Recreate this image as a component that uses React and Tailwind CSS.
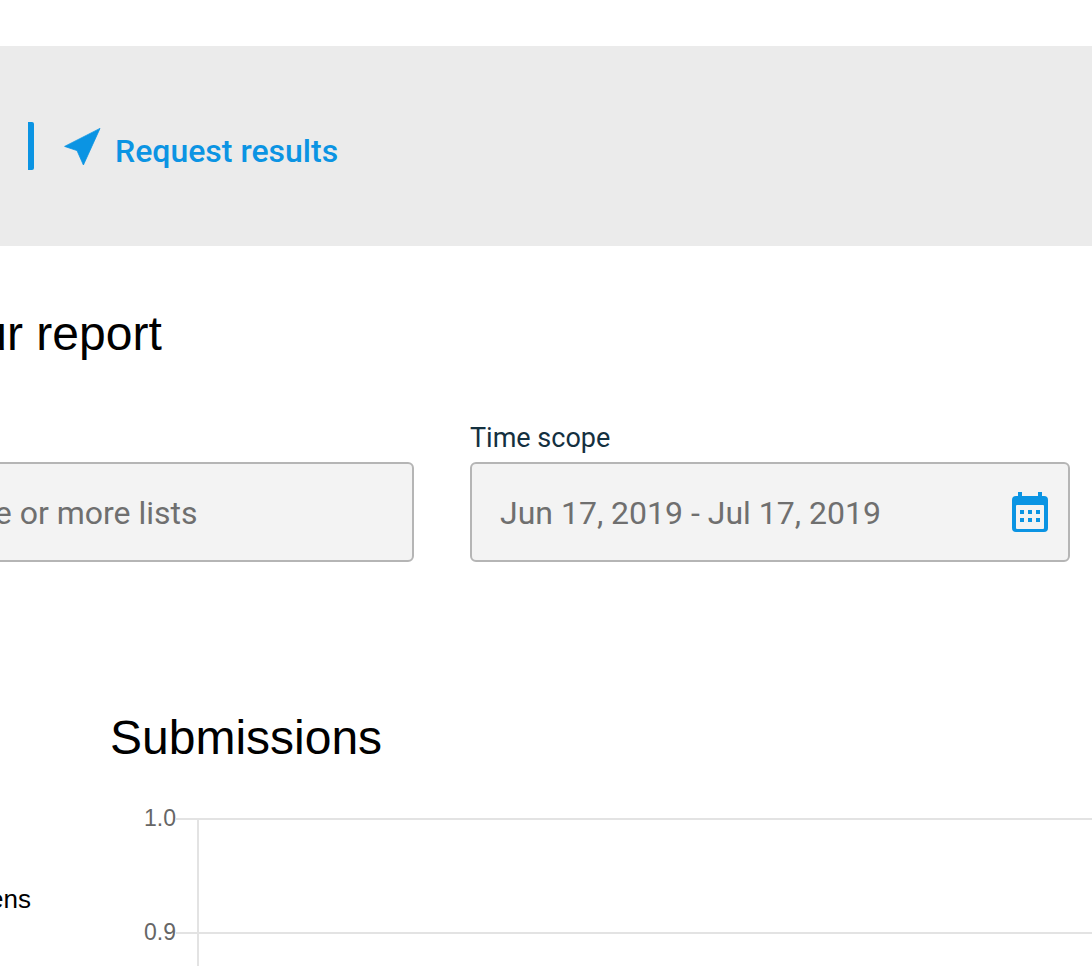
export default function App() {
  const roboto = "font-['Roboto',sans-serif]";
  const helv = "font-['Liberation_Sans',Arial,sans-serif]";
  const dots = [[8, 18], [16, 18], [24, 18], [8, 26], [16, 26], [24, 26]];
  return (
    <div className="w-[1092px] h-[966px] overflow-hidden bg-white">
      <div className="h-[200px] mt-[46px] bg-[#ebebeb] flex items-center pl-[28px]">
        <div className="w-[6px] h-[48px] rounded-r-[2px] bg-[#0b94e3]" />
        <svg width="37" height="38" viewBox="0 0 37 38" className="ml-[30px] mr-[14px] mt-[2px]">
          <path d="M0.6 18.4 L36 0.4 L19.4 37 L13 22.6 Z" fill="#0b94e3" stroke="#0b94e3" strokeWidth="0.8" strokeLinejoin="round" />
        </svg>
        <span className={`${roboto} mt-[10px] text-[32px] leading-none font-medium text-[#0b94e3] whitespace-nowrap`}>Request results</span>
      </div>

      <h2 className={`${helv} ml-[-74px] mt-[61px] text-[48px] leading-[54px] text-black whitespace-nowrap`}>Your report</h2>

      <div className={`${roboto} ml-[-186px] mt-[62px] flex gap-[56px] w-[1256px]`}>
        <div className="w-[600px] shrink-0">
          <div className="h-[30px] mb-[9px]" />
          <div className="h-[100px] rounded-[6px] border-2 border-[#b5b5b5] bg-[#f3f3f3] flex items-center pl-[28px] text-[32px] text-[#6f6f6f] whitespace-nowrap">
            <span className="ml-[19px] mt-[2px]">Select one or more lists</span>
          </div>
        </div>
        <div className="w-[600px] shrink-0">
          <div className="h-[30px] mb-[9px] text-[27px] leading-[30px] text-[#14303f]">Time scope</div>
          <div className="h-[100px] rounded-[6px] border-2 border-[#b5b5b5] bg-[#f3f3f3] flex items-center justify-between pl-[28px] pr-[20px] text-[32px] text-[#6f6f6f] whitespace-nowrap">
            <span className="mt-[2px]">Jun 17, 2019 - Jul 17, 2019</span>
            <svg width="36" height="40" viewBox="0 0 36 40">
              <path d="M6 0h4v4h16V0h4v4h2a4 4 0 0 1 4 4v28a4 4 0 0 1-4 4H4a4 4 0 0 1-4-4V8a4 4 0 0 1 4-4h2Z" fill="#0b94e3" />
              <rect x="4" y="13" width="28" height="24" rx="1" fill="#f3f3f3" />
              {dots.map(([x, y]) => <rect key={`${x}-${y}`} x={x} y={y} width="4" height="4" fill="#0b94e3" />)}
            </svg>
          </div>
        </div>
      </div>

      <h2 className={`${helv} ml-[110px] mt-[149px] text-[48px] leading-[54px] text-black whitespace-nowrap`}>Submissions</h2>

      <div className={`${helv} flex mt-[39px]`}>
        <div className="w-[31px] shrink-0 flex justify-end pt-[80px]">
          <span className="text-[26px] leading-[30px] text-black whitespace-nowrap">Opens</span>
        </div>
        <svg width="1061" height="190" viewBox="0 0 1061 190" className="block shrink-0">
          <line x1="145" y1="15" x2="1061" y2="15" stroke="#e3e3e3" strokeWidth="2" />
          <line x1="145" y1="129" x2="1061" y2="129" stroke="#e3e3e3" strokeWidth="2" />
          <line x1="167" y1="15" x2="167" y2="190" stroke="#e3e3e3" strokeWidth="2" />
          <text x="145" y="22" textAnchor="end" fontSize="23" fill="#666666">1.0</text>
          <text x="145" y="136" textAnchor="end" fontSize="23" fill="#666666">0.9</text>
        </svg>
      </div>
    </div>
  );
}
